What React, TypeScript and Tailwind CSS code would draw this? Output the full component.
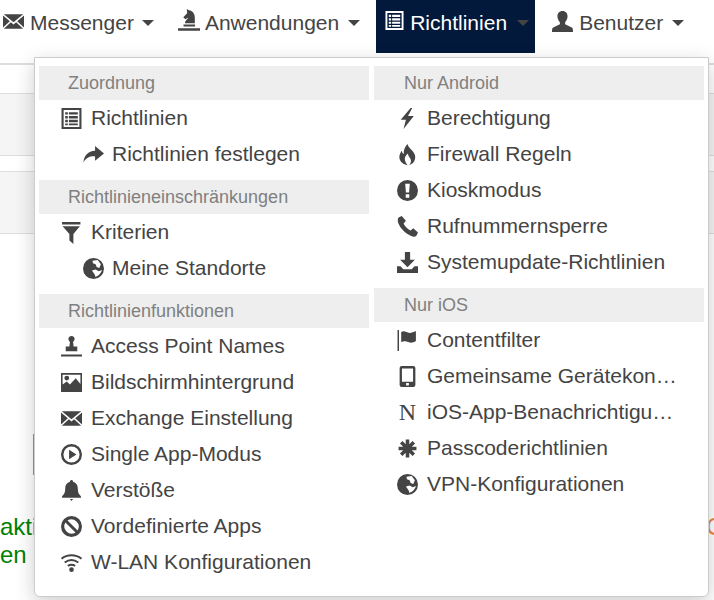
import React from "react";

const font = "font-['Liberation_Sans',Arial,sans-serif]";

// glyphicon style drawings, all on a 20x20 box
const icons: Record<string, React.ReactNode> = {
  envelope: (
    <path
      fill="currentColor"
      d="M.8 3h18.400L10 10.600zM0 4.200l6.500 5.500L0 15.800zM20 4.200l-6.500 5.500 6.500 6.100zM.8 17l6.700-6.300 2.500 2.100 2.500-2.100 6.700 6.300z"
    />
  ),
  list: (
    <path
      fill="currentColor"
      fillRule="evenodd"
      d="M.5 0h19v20H.5zM2.500 2v16h15V2zM4 4h2.500v2.300H4zM7.500 4H16v2.300H7.500zM4 7.700h2.500V10H4zM7.500 7.700H16V10H7.500zM4 11.300h2.500v2.200H4zM7.500 11.300H16v2.200H7.500zM4 14.700h2.500V16.500H4zM7.500 14.700H16V16.500H7.500z"
    />
  ),
  knight: (
    <path
      fill="currentColor"
      d="M8 0l2 1.200c3.200.4 5.300 3 5.300 6.800v5H6.300c0-2.300 2-3.300 3.200-5.200L6.700 9.300 4.800 7.500l3.500-3.700zM5 14h10.500v1.800H5zM0 17.600h20v2.200H0z"
    />
  ),
  user: (
    <path
      fill="currentColor"
      d="M10 0c3.200 0 4.800 2.200 4.800 5 0 2.200-1 4.200-2.300 5.600v2.100l6.800 3.300c.6.500.7 2.500.7 4H0c0-1.500.1-3.500.7-4l6.800-3.300v-2.100C6.200 9.200 5.200 7.200 5.200 5c0-2.800 1.600-5 4.800-5z"
    />
  ),
  share: <path fill="currentColor" d="M11.500 2l8.500 7-8.500 7v-4.200C6.500 11.500 3 13 .5 17.500c.3-6.500 4.500-10.500 11-11z" />,
  filter: <path fill="currentColor" d="M1 0h17.500v2.300H1zM1.500 4H18L11.800 11.500V21L8 17.500v-6z" />,
  bolt: <path fill="currentColor" d="M13 0L3.500 11.300h5L6.200 20 16 7.700h-5.500L14.500 0z" />,
  fire: (
    <path
      fill="currentColor"
      d="M10 0c.5 3 3 4.500 5 7 2 2.500 3 5 2 8-.7 2.500-3 4.500-5.500 5 2-2 2.500-4.500 1-6.500-1-1.500-2-2.500-2-4.500-2 1.500-3.500 3.500-3 6 .3 2 1.500 3.800 2.500 5-4-.5-7-3-7.700-6.500-.3-2.500.7-5 2.200-7 .3 1.500.8 2.500 2 3-.5-3.500 1-6.500 3.500-9.500z"
    />
  ),
  alert: (
    <path
      fill="currentColor"
      fillRule="evenodd"
      d="M10 0a10 10 0 100 20 10 10 0 000-20zM7.800 3.500h4.400l-.7 8.500H8.500zM8.300 13.500h3.400v3.300H8.300z"
    />
  ),
  phone: <path fill="currentColor" d="M4.500 0L8.500 4.500 6.300 7.200c1 2.500 4 5.700 6.700 6.700l2.500-2.300 4.500 4-1.500 3.200c-1 1-3 1.200-5 .2C7.500 16.500 3 11.800 1 6.300.5 4 .7 2.500 1.500 1.500z" />,
  download: <path fill="currentColor" d="M7.500 0h5v7.500H17l-7 7-7-7h4.500zM0 13.500h3.300l2.700 3h8l2.700-3H20V20H0z" />,
  flag: <path fill="currentColor" d="M.5 0h1.400v20H.5zM4 2c3-2 5 .8 8 .8 2 0 4-1 6-1.800v9.500c-2 1.200-4 2-6 1.500-2.500-1-5-2-8-.5z" />,
  device: (
    <path
      fill="currentColor"
      fillRule="evenodd"
      d="M4.500 0h11a2 2 0 012 2v16a2 2 0 01-2 2h-11a2 2 0 01-2-2V2a2 2 0 012-2zM4.700 2.300V15h10.600V2.300zM8.700 16.200v2.300h2.600v-2.300z"
    />
  ),
  asterisk: (
    <path
      fill="none"
      stroke="currentColor"
      strokeWidth="3.400"
      d="M10 1.500v17M1.500 10h17M4 4l12 12M16 4L4 16"
    />
  ),
  globe: (
    <path
      fill="currentColor"
      fillRule="evenodd"
      d="M10 0a10 10 0 100 20 10 10 0 000-20zM9 2.500L14 2l3 4-1.500 3.500-2.500-1-1-2.500L9.500 5zM8.500 12l3.500-1 3 1.500 3-1c-.5 2.500-3 5.500-6 6.500l-1-2.500z"
    />
  ),
  stamp: (
    <path
      fill="currentColor"
      d="M10 0a3 3 0 011.500 5.600L12 10h3.500v4.500h-11V10H8l.5-4.400A3 3 0 0110 0zM0 17.500h20V19.500H0z"
    />
  ),
  image: (
    <path
      fill="currentColor"
      fillRule="evenodd"
      d="M0 1h20v18H0zM1.500 2.500v9.500l4-3 3 3L14 6l4.500 5.500v-9zM5.500 3.500a2.300 2.300 0 110 4.600 2.300 2.300 0 010-4.600z"
    />
  ),
  play: (
    <path
      fill="currentColor"
      fillRule="evenodd"
      d="M10 0a10 10 0 100 20 10 10 0 000-20zM10 2.300a7.700 7.700 0 110 15.400 7.700 7.700 0 010-15.400zM7.700 5.500l7 4.500-7 4.500z"
    />
  ),
  bell: (
    <path
      fill="currentColor"
      d="M10 0a1.500 1.500 0 011.500 1.700C14.500 2.500 16 5 16 8c0 4 1 5.500 3 7.500V17H1v-1.500c2-2 3-3.500 3-7.500 0-3 1.500-5.500 4.500-6.300A1.500 1.500 0 0110 0zM8.500 18h3L10 20z"
    />
  ),
  ban: (
    <path
      fill="currentColor"
      fillRule="evenodd"
      d="M10 0a10 10 0 100 20 10 10 0 000-20zM4.200 6.200l9.600 9.600A7 7 0 014.200 6.200zM6.200 4.200a7 7 0 019.600 9.600z"
    />
  ),
  wifi: (
    <>
      <circle cx="10" cy="16.800" r="2.200" fill="currentColor" />
      <path
        fill="none"
        stroke="currentColor"
        strokeWidth="1.900"
        d="M.5 6.500C6 2 14 2 19.500 6.500M3.500 10c4-3 9-3 13 0M6.500 13.200c2-1.300 5-1.300 7 0"
      />
    </>
  ),
};

type Row = { label: string; icon?: string; glyph?: string; sub?: boolean };
type Group = { title: string; rows: Row[] };

const left: Group[] = [
  {
    title: "Zuordnung",
    rows: [
      { label: "Richtlinien", icon: "list" },
      { label: "Richtlinien festlegen", icon: "share", sub: true },
    ],
  },
  {
    title: "Richtlinieneinschränkungen",
    rows: [
      { label: "Kriterien", icon: "filter" },
      { label: "Meine Standorte", icon: "globe", sub: true },
    ],
  },
  {
    title: "Richtlinienfunktionen",
    rows: [
      { label: "Access Point Names", icon: "stamp" },
      { label: "Bildschirmhintergrund", icon: "image" },
      { label: "Exchange Einstellung", icon: "envelope" },
      { label: "Single App-Modus", icon: "play" },
      { label: "Verstöße", icon: "bell" },
      { label: "Vordefinierte Apps", icon: "ban" },
      { label: "W-LAN Konfigurationen", icon: "wifi" },
    ],
  },
];

const right: Group[] = [
  {
    title: "Nur Android",
    rows: [
      { label: "Berechtigung", icon: "bolt" },
      { label: "Firewall Regeln", icon: "fire" },
      { label: "Kioskmodus", icon: "alert" },
      { label: "Rufnummernsperre", icon: "phone" },
      { label: "Systemupdate-Richtlinien", icon: "download" },
    ],
  },
  {
    title: "Nur iOS",
    rows: [
      { label: "Contentfilter", icon: "flag" },
      { label: "Gemeinsame Gerätekon…", icon: "device" },
      { label: "iOS-App-Benachrichtigu…", glyph: "N" },
      { label: "Passcoderichtlinien", icon: "asterisk" },
      { label: "VPN-Konfigurationen", icon: "globe" },
    ],
  },
];

function Icon({ name, size = 21, className = "" }: { name: string; size?: number; className?: string }) {
  return (
    <svg viewBox="0 0 20 20" width={size} height={size} className={`shrink-0 overflow-visible ${className}`}>
      {icons[name]}
    </svg>
  );
}

function Caret({ className }: { className: string }) {
  return <span className={`inline-block border-x-[6px] border-t-[6px] border-x-transparent border-t-[#444444] ${className}`} />;
}

function Column({ groups, rowPad, headPad }: { groups: Group[]; rowPad: string; headPad: string }) {
  return (
    <div className="flex w-[330px] flex-col">
      {groups.map((g) => (
        <div key={g.title} className="mb-[8px]">
          <div className={`flex h-[34px] items-center bg-[#eeeeee] text-[18px] text-[#808080] ${headPad}`}>{g.title}</div>
          {g.rows.map((r) => (
            <div
              key={r.label}
              className={`flex h-[36px] items-center text-[21px] text-[#444444] ${r.sub ? "pl-[44px]" : rowPad}`}
            >
              <span className={`flex w-[21px] justify-center ${r.sub ? "mr-[8px]" : "mr-[9px]"}`}>
                {r.icon ? (
                  <Icon name={r.icon} />
                ) : (
                  <span className="font-['Liberation_Serif',serif] text-[24px] leading-none">{r.glyph}</span>
                )}
              </span>
              <span className="whitespace-nowrap">{r.label}</span>
            </div>
          ))}
        </div>
      ))}
    </div>
  );
}

export default function App() {
  return (
    <div className={`relative h-[600px] w-[714px] overflow-hidden bg-white ${font}`}>
      {/* top nav */}
      <nav className="flex h-[53px] items-start text-[21px] leading-[46px] text-[#444444]">
        <div className="flex items-center pl-[3px]">
          <Icon name="envelope" size={21} className="-translate-y-[2px]" />
          <span className="ml-[6px]">Messenger</span>
          <Caret className="ml-[8px]" />
        </div>
        <div className="ml-[24px] flex items-center">
          <Icon name="knight" size={22} className="-translate-y-[3px]" />
          <span className="ml-[5px]">Anwendungen</span>
          <Caret className="ml-[9px]" />
        </div>
        <div className="ml-[16px] flex h-[53px] w-[159px] items-start bg-[#03193b] pl-[9px] text-white">
          <div className="flex items-center">
            <Icon name="list" size={19} className="-translate-y-[3px]" />
            <span className="ml-[6px]">Richtlinien</span>
            <Caret className="ml-[10px]" />
          </div>
        </div>
        <div className="ml-[17px] flex items-center">
          <Icon name="user" size={21} className="-translate-y-[2px]" />
          <span className="ml-[6px]">Benutzer</span>
          <Caret className="ml-[9px]" />
        </div>
      </nav>

      {/* page behind the menu */}
      <div className="mt-[10px] h-[30px] border-t-2 border-[#dddddd]" />
      <div className="h-[62px] border-t border-[#dddddd] bg-[#f5f5f5]" />
      <div className="h-[16px] border-t border-[#dddddd]" />
      <div className="h-[62px] border-t border-[#dddddd] bg-[#f5f5f5]" />
      <div className="border-t border-[#dddddd]" />
      <div className="mt-[200px] ml-[33px] h-[41px] w-[2px] bg-[#7cb342]" />
      <div className="mt-[38px] flex h-[28px] items-center justify-between text-[24px] leading-[28px] text-[#008000]">
        <span>aktiv</span>
        <span className="-mr-[11px] text-[#e8883a]">O</span>
      </div>
      <div className="flex h-[27px] items-center text-[24px] leading-[27px] text-[#008000]">
        <span>en</span>
        <span className="ml-[7px] text-[#e8883a]">a</span>
      </div>
      <div className="mt-[15px] ml-[44px] flex gap-[7px]">
        <span className="h-[6px] w-[2px] bg-[#008000]" />
        <span className="h-[6px] w-[2px] bg-[#008000]" />
      </div>

      {/* dropdown */}
      <div className="absolute left-[34px] top-[57px] flex h-[540px] w-[675px] gap-[5px] rounded-b-[6px] border border-[#cccccc] bg-white pl-[4px] pt-[8px] shadow-[0_6px_20px_rgba(0,0,0,0.2)]">
        <Column groups={left} rowPad="pl-[22px]" headPad="pl-[29px]" />
        <Column groups={right} rowPad="pl-[23px]" headPad="pl-[30px]" />
      </div>
    </div>
  );
}
